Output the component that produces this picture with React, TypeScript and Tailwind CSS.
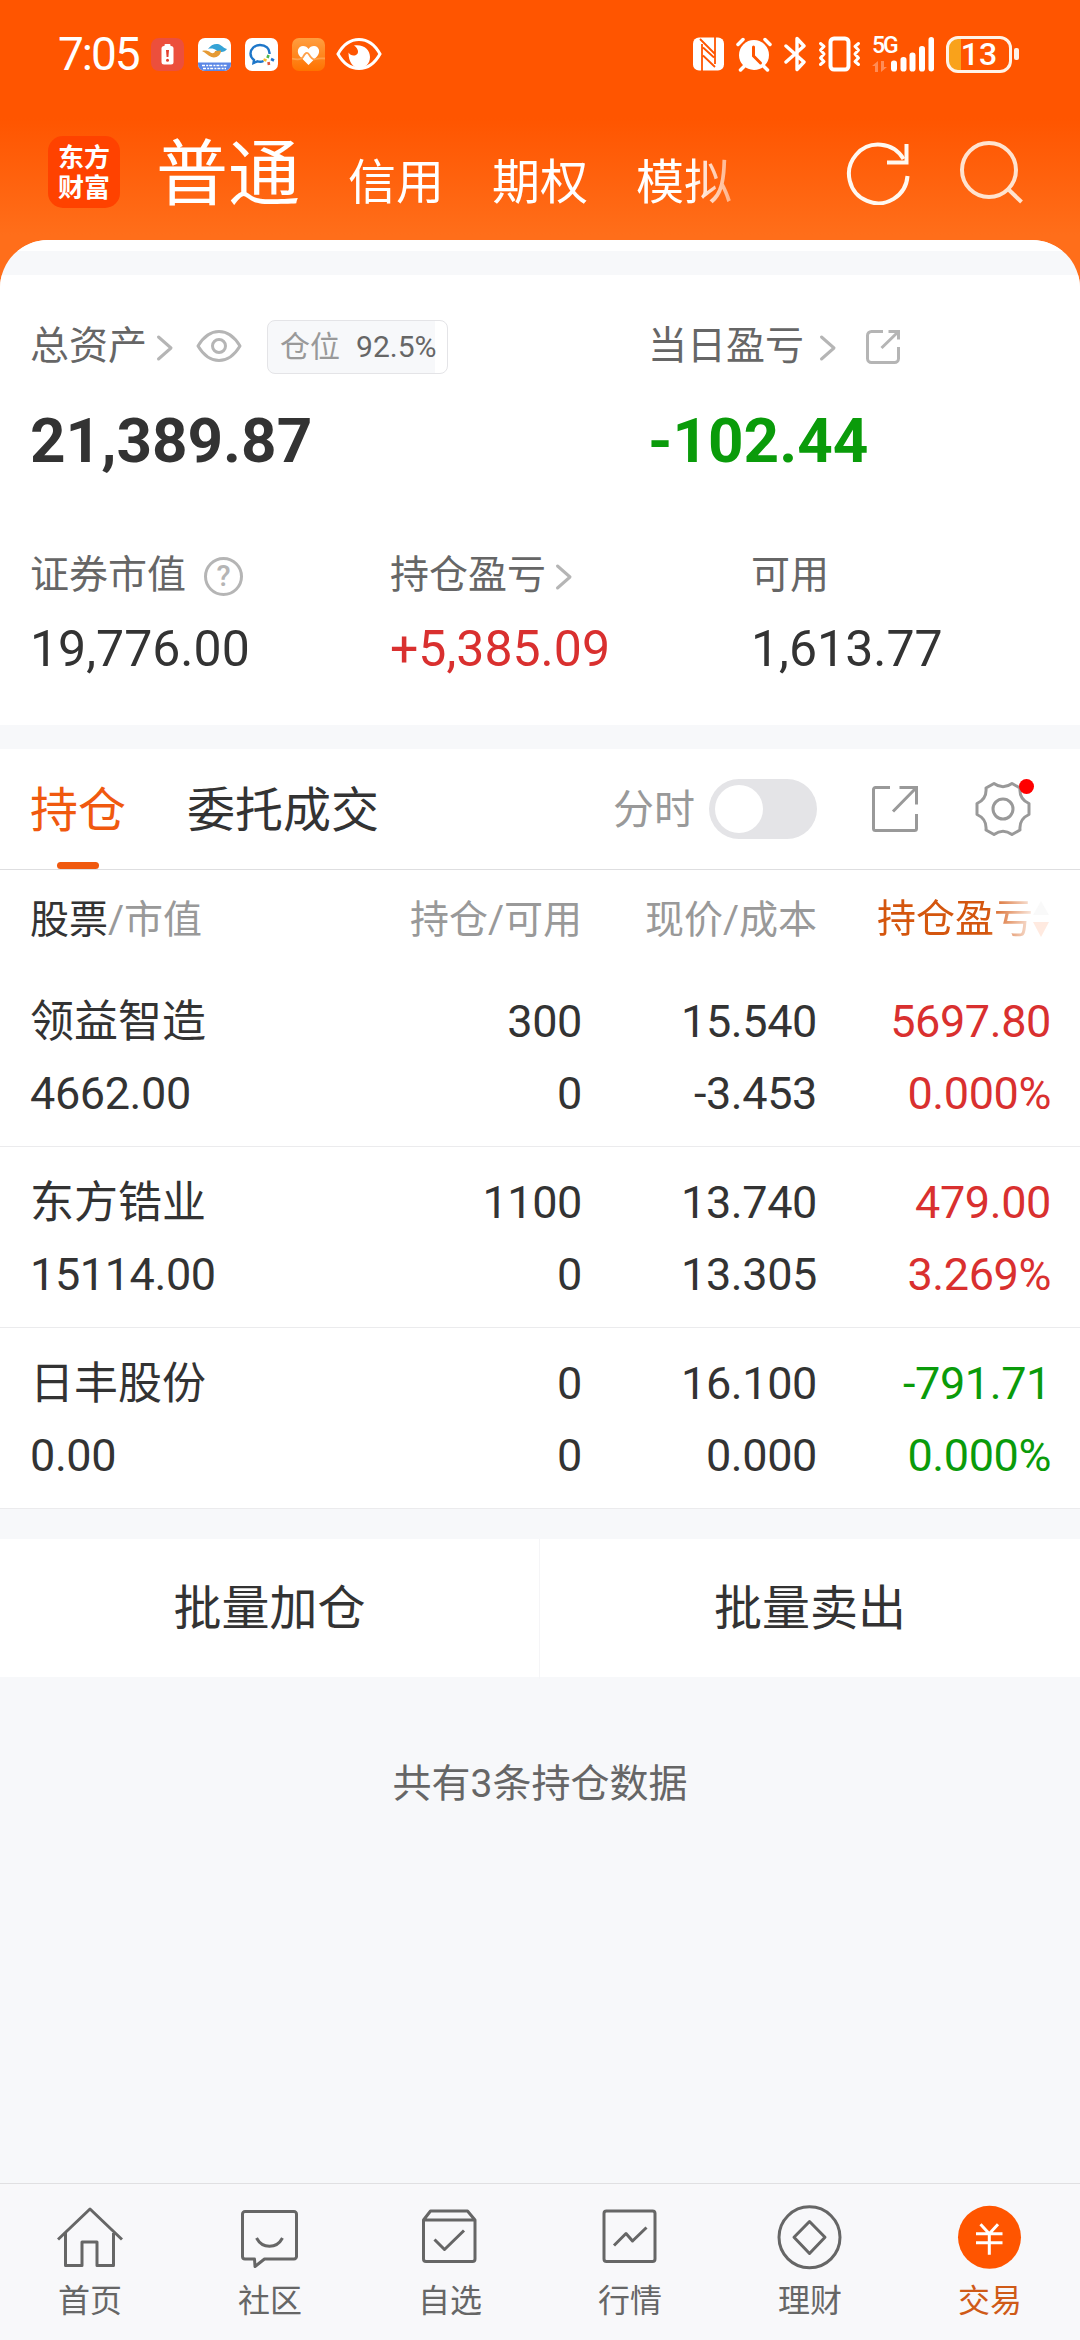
import React from "react";

const holdings = [
  {
    name: "领益智造",
    value: "4662.00",
    amount: "300",
    available: "0",
    price: "15.540",
    cost: "-3.453",
    profit: "5697.80",
    rate: "0.000%",
    color: "text-[#d9302f]",
  },
  {
    name: "东方锆业",
    value: "15114.00",
    amount: "1100",
    available: "0",
    price: "13.740",
    cost: "13.305",
    profit: "479.00",
    rate: "3.269%",
    color: "text-[#d9302f]",
  },
  {
    name: "日丰股份",
    value: "0.00",
    amount: "0",
    available: "0",
    price: "16.100",
    cost: "0.000",
    profit: "-791.71",
    rate: "0.000%",
    color: "text-[#0a9b0a]",
  },
];

const Chevron = ({ className = "" }: { className?: string }) => (
  <svg
    className={className}
    width="18"
    height="28"
    viewBox="0 0 18 28"
    fill="none"
    stroke="#b5b5b5"
    strokeWidth="3"
    strokeLinecap="round"
    strokeLinejoin="round"
  >
    <path d="M2.5 3L15 14L2.5 25" />
  </svg>
);

const StatusBar = () => (
  <div className="flex h-[108px] items-center pl-[58px] pr-[61px] text-white">
    <span className="w-[93px] text-[46px] leading-[46px] tracking-[-2px]">
      7:05
    </span>
    <div className="flex items-center gap-[14px]">
      {/* battery warning */}
      <svg width="33" height="33" viewBox="0 0 33 33">
        <rect width="33" height="33" rx="8" fill="#ec4f3c" />
        <rect x="13.5" y="6" width="6" height="3" rx="1" fill="#fff" />
        <rect x="10.5" y="8" width="12" height="18.5" rx="2.5" fill="#fff" />
        <path d="M15 12h3l-.6 7h-1.8z" fill="#e33f2e" />
        <circle cx="16.5" cy="22.3" r="1.5" fill="#e33f2e" />
      </svg>
      {/* cloud app */}
      <svg width="33" height="33" viewBox="0 0 33 33">
        <clipPath id="app">
          <rect width="33" height="33" rx="7" />
        </clipPath>
        <g clipPath="url(#app)">
          <rect width="33" height="33" fill="#fff" />
          <path
            d="M10 11C13 6.5 19 4.500 23 7.500C25 9 27 10.500 29 11C27 14.500 22 15 18.500 12.500C16 10.500 13 10 10 11Z"
            fill="#35a3d6"
          />
          <path
            d="M4 13C7 12 10 12.500 12.500 14.500C14.500 16 17 15 17 13L23 12.500C23 17.500 18 20.500 13.500 19C10 17.500 7 14.500 4 13Z"
            fill="#e59a35"
          />
          <rect y="24.5" width="33" height="9" fill="#5b87e6" />
          <path
            d="M4 27.500H29M5 30.500H28"
            stroke="#fff"
            strokeWidth="1.5"
            strokeDasharray="3 1.200 2 1"
          />
        </g>
      </svg>
      {/* work chat */}
      <svg width="33" height="33" viewBox="0 0 33 33" fill="none">
        <rect width="33" height="33" rx="7" fill="#fff" />
        <path
          d="M24.5 16C25 10.5 20.5 7 15 7C9.5 7 5.5 11 5.5 15.5C5.5 18 7 20.5 9 22L8.5 25L12.5 23.3C14.5 23.9 17 23.7 18.5 23"
          stroke="#1d76c9"
          strokeWidth="2.4"
        />
        <path d="M23.5 17L22.5 20" stroke="#4fb848" strokeWidth="2.6" />
        <path d="M26 21L29 22.5" stroke="#2273c8" strokeWidth="2.6" />
        <path d="M23.5 24L24 27" stroke="#e2583a" strokeWidth="2.6" />
        <path d="M18.5 21.5L21.5 22.5" stroke="#f6bd2f" strokeWidth="2.6" />
      </svg>
      {/* health */}
      <svg width="33" height="33" viewBox="0 0 33 33">
        <defs>
          <linearGradient id="health" x1="0" y1="0" x2="0" y2="1">
            <stop offset="0" stopColor="#ff9e40" />
            <stop offset="1" stopColor="#ff7200" />
          </linearGradient>
        </defs>
        <rect width="33" height="33" rx="7" fill="url(#health)" />
        <path
          d="M16.5 27L8 18.5C4 14 6 8 11 8C13.5 8 15.300 9.200 16.5 11C17.700 9.200 19.5 8 22 8C27 8 29 14 25 18.5Z"
          fill="#fff"
        />
        <path
          d="M0 20.500C4 21.500 9 22.500 11 19C13 15 15 13.500 17 16.500C19 20 21 22.500 24 21C27 20 30 20.500 33 20.500"
          fill="none"
          stroke="#ffa04a"
          strokeWidth="1.8"
        />
      </svg>
    </div>
    <svg
      className="ml-[11px]"
      width="46"
      height="34"
      viewBox="0 0 46 34"
      fill="none"
    >
      <path
        d="M2 17C7 8 14 2.500 23 2.500S39 8 44 17C39 26 32 31.500 23 31.500S7 26 2 17z"
        stroke="#fff"
        strokeWidth="3"
      />
      <path
        d="M18 8.500C28 7 34 13 34 20C34 27 29 31 23 31C17 31 12.500 25 12.500 15.500C14 18 17 19.500 20 18C23 16.500 23 12 18 8.500Z"
        fill="#fff"
      />
    </svg>

    <div className="ml-auto flex items-center">
      {/* nfc */}
      <svg width="31" height="34" viewBox="0 0 31 34" fill="none">
        <rect x="0" y="0.5" width="31" height="33" rx="6" fill="#fff" />
        <path
          d="M9 34V7M22 0V27M7 2L22 17M10 10.500L21 20.500M10 18.500L22 30"
          stroke="#ff5500"
          strokeWidth="1.8"
        />
      </svg>
      <svg
        className="ml-[12px]"
        width="36"
        height="35"
        viewBox="0 0 36 35"
        fill="none"
      >
        <circle cx="18" cy="18" r="15" fill="#fff" />
        <path
          d="M8 29.5L4.5 33M28 29.5L31.5 33M2 7.500L7 2.500M34 7.500L29 2.500"
          stroke="#fff"
          strokeWidth="3.5"
          strokeLinecap="round"
        />
        <path
          d="M17.500 10V19L24.500 26"
          stroke="#ff5500"
          strokeWidth="3"
          strokeLinecap="round"
        />
      </svg>
      <svg
        className="ml-[12px]"
        width="23"
        height="36"
        viewBox="0 0 23 36"
        fill="none"
        stroke="#fff"
        strokeWidth="3.4"
        strokeLinecap="round"
        strokeLinejoin="round"
      >
        <path d="M2 10L20 26L13 33.500V2.500L20 10L2 26" />
      </svg>
      <svg
        className="ml-[11px]"
        width="43"
        height="36"
        viewBox="0 0 43 36"
        fill="none"
        stroke="#fff"
        strokeLinecap="round"
        strokeLinejoin="round"
      >
        <rect x="12.5" y="2.5" width="18" height="31" rx="3.5" strokeWidth="4" />
        <path
          d="M2.500 7.500L6 10.500L2.500 14L6 18L2.500 22L6 25.500L2.500 28.500M40.500 7.500L37 10.500L40.500 14L37 18L40.500 22L37 25.500L40.500 28.500"
          strokeWidth="3"
        />
      </svg>
      <div className="ml-[11px] flex h-[35px] items-end">
        <div className="flex h-full w-[19px] flex-col justify-between">
          <span className="text-[23px] font-medium leading-[18px] tracking-[-2px]">
            5G
          </span>
          <svg width="16" height="11" viewBox="0 0 16 11" fill="#ff8c55">
            <path d="M0 5L6 0V11H3V5ZM9 0V11L15 6H12V0Z" />
          </svg>
        </div>
        <svg width="44" height="35" viewBox="0 0 44 35" fill="#fff">
          <rect x="0" y="23.5" width="6" height="11" rx="2.8" />
          <rect x="9.5" y="20" width="6" height="14.5" rx="2.8" />
          <rect x="18.5" y="15.5" width="6" height="19" rx="2.8" />
          <rect x="28" y="9" width="6" height="25.5" rx="2.8" />
          <rect x="37.5" y="0" width="5.5" height="34.5" rx="2.75" />
        </svg>
      </div>
      <div className="ml-[11px] flex h-[37px] w-[66px] items-center overflow-hidden rounded-[12px] border-[3px] border-[#fff3e8] bg-[linear-gradient(90deg,#f9a21b_12px,transparent_12px)]">
        <span className="w-full text-center text-[32px] font-medium leading-[31px]">
          13
        </span>
      </div>
      <div className="ml-[2px] h-[12px] w-[5px] rounded-[2px] bg-[#fff3e8]" />
    </div>
  </div>
);

const Header = () => (
  <header className="h-[300px] bg-[linear-gradient(180deg,#ff5500_0px,#ff5500_118px,#ff6e1a_235px,#ff6e1a_300px)]">
    <StatusBar />
    <div className="flex h-[132px] pl-[48px] text-white">
      <div className="mt-[28px] flex h-[72px] w-[72px] flex-col items-center justify-center rounded-[15px] bg-[#ff4200] pt-[2px] text-[26px] font-bold leading-[30px]">
        <span>东方</span>
        <span>财富</span>
      </div>
      <div className="ml-[36px] flex items-baseline gap-[48px] whitespace-nowrap text-[48px] [mask-image:linear-gradient(90deg,#000_535px,transparent_615px)]">
        <span className="text-[72px] leading-[134px]">普通</span>
        <span>信用</span>
        <span>期权</span>
        <span>模拟</span>
      </div>
      <svg
        className="ml-auto mt-[31px]"
        width="66"
        height="66"
        viewBox="0 0 66 66"
        fill="none"
        stroke="#fff8f0"
        strokeWidth="4"
      >
        <path d="M62.500 37A29.300 29.300 0 1 1 58.500 20" />
        <path d="M61.500 5V23.500H42" />
      </svg>
      <svg
        className="ml-[47px] mr-[56px] mt-[31px]"
        width="66"
        height="66"
        viewBox="0 0 66 66"
        fill="none"
        stroke="#ffe3cf"
        strokeWidth="4"
      >
        <circle cx="31" cy="31" r="27" />
        <path d="M50 50L63.500 63" />
      </svg>
    </div>
  </header>
);

const Assets = () => (
  <section className="h-[450px] bg-white pt-[41px] text-[#666]">
    <div className="flex h-[60px] text-[39px] leading-[60px]">
      <div className="flex w-[648px] items-center pl-[30px]">
        <span>总资产</span>
        <Chevron className="ml-[9px] mt-[3px]" />
        <svg
          className="ml-[22px]"
          width="46"
          height="34"
          viewBox="0 0 46 34"
          fill="none"
          stroke="#b5b5b5"
          strokeWidth="3"
        >
          <path
            d="M2 17C8 7 14 2.500 23 2.500S38 7 44 17C38 27 32 31.500 23 31.500S8 27 2 17z"
            strokeLinejoin="round"
          />
          <circle cx="23" cy="17" r="6.5" />
        </svg>
        <div className="ml-[25px] mt-[1px] flex h-[54px] w-[181px] items-center rounded-[8px] border border-[#e4e4e7] bg-[linear-gradient(90deg,#f7f8fa_167px,#fff_167px)] pl-[12px] text-[30px] leading-[50px]">
          <span className="text-[#999]">仓位</span>
          <span className="ml-[16px]">92.5%</span>
        </div>
      </div>
      <div className="flex items-center">
        <span>当日盈亏</span>
        <Chevron className="ml-[15px] mt-[3px]" />
        <svg
          className="ml-[28px] mt-[2px]"
          width="36"
          height="36"
          viewBox="0 0 36 36"
          fill="none"
          stroke="#b5b5b5"
          strokeWidth="3"
        >
          <path d="M18 2.500H6.500A4 4 0 0 0 2.500 6.500V29.500A4 4 0 0 0 6.500 33.500H29.500A4 4 0 0 0 33.500 29.500V18" />
          <path d="M23.500 2.500H33.500V10.500M33.500 2.500L16.500 19" />
        </svg>
      </div>
    </div>
    <div className="mt-[30px] flex h-[70px] text-[62px] font-bold leading-[70px]">
      <span className="w-[648px] pl-[30px] text-[#333]">21,389.87</span>
      <span className="text-[#0a9b0a]">-102.44</span>
    </div>
    <div className="mt-[69px] flex h-[60px] text-[39px] leading-[60px]">
      <div className="flex w-[390px] items-center pl-[30px]">
        <span>证券市值</span>
        <span className="ml-[18px] mt-[2px] flex h-[39px] w-[39px] items-center justify-center rounded-full border-[3px] border-[#b5b5b5] text-[29px] font-medium leading-[33px] text-[#b5b5b5]">
          ?
        </span>
      </div>
      <div className="flex w-[361px] items-center">
        <span>持仓盈亏</span>
        <Chevron className="ml-[9px] mt-[3px]" />
      </div>
      <span>可用</span>
    </div>
    <div className="mt-[14px] flex h-[60px] text-[50px] leading-[60px] text-[#333]">
      <span className="w-[390px] pl-[30px]">19,776.00</span>
      <span className="w-[361px] text-[#d9302f]">+5,385.09</span>
      <span>1,613.77</span>
    </div>
  </section>
);

const Tabs = () => (
  <div className="flex h-[121px] items-center border-b border-[#dedee0] bg-white pl-[30px] text-[48px] text-[#333]">
    <div className="relative flex h-[120px] items-center pt-[3px] text-[#f0590f]">
      <span>持仓</span>
      <div className="absolute bottom-0 left-[27px] h-[7px] w-[42px] rounded-full bg-[#f0590f]" />
    </div>
    <span className="ml-[61px] pt-[3px]">委托成交</span>
    <span className="ml-[234px] pt-[3px] text-[41px] text-[#999]">分时</span>
    <div className="ml-[14px] flex h-[60px] w-[108px] items-center rounded-full bg-[#e4e4e7] pl-[6px]">
      <div className="h-[48px] w-[48px] rounded-full bg-white" />
    </div>
    <svg
      className="ml-[54px]"
      width="48"
      height="48"
      viewBox="0 0 48 48"
      fill="none"
      stroke="#999"
      strokeWidth="3"
    >
      <path d="M19 2.500H4.500A2 2 0 0 0 2.500 4.500V43.500A2 2 0 0 0 4.500 45.500H43.500A2 2 0 0 0 45.500 43.500V29" />
      <path d="M28.500 2.500H45.500V19.500M45.500 2.500L22 26.500" />
    </svg>
    <div className="relative ml-[55px]">
      <svg
        width="58"
        height="58"
        viewBox="0 0 58 58"
        fill="none"
        stroke="#999"
        strokeWidth="3"
        strokeLinejoin="round"
      >
        <path d="M20 3.500Q29 10 38 3.500L46 8Q45 19 55 23.500V34.500Q45 39 46 50L38 54.500Q29 48 20 54.500L12 50Q13 39 3 34.500V23.500Q13 19 12 8Z" />
        <circle cx="29" cy="29" r="10" />
      </svg>
      <div className="absolute -right-[2px] -top-[1px] h-[15px] w-[15px] rounded-full bg-[#ff0000]" />
    </div>
  </div>
);

const Holdings = () => (
  <section className="bg-white">
    <div className="flex h-[96px] pt-[2px] text-[39px] leading-[96px] text-[#999]">
      <div className="w-[282px] pl-[30px]">
        <span className="text-[#333]">股票</span>/市值
      </div>
      <span className="w-[300px] text-right">持仓/可用</span>
      <span className="w-[235px] text-right">现价/成本</span>
      <div className="ml-[60px] flex items-center text-[#d4560e] [mask-image:linear-gradient(90deg,#000_110px,rgba(0,0,0,0.12)_156px)]">
        <span>持仓盈亏</span>
        <svg width="16" height="36" viewBox="0 0 16 36">
          <path d="M8 0L16 14H0z" fill="#ccc" />
          <path d="M8 36L16 21H0z" fill="#ff5500" />
        </svg>
      </div>
    </div>
    {holdings.map((item) => (
      <div
        key={item.name}
        className="flex h-[181px] border-b border-[#ebebed] pt-[20px] text-[45px] leading-[72px] tracking-[-0.4px] text-[#333]"
      >
        <div className="flex w-[282px] flex-col pl-[30px]">
          <span className="text-[44px] tracking-normal">{item.name}</span>
          <span>{item.value}</span>
        </div>
        <div className="flex w-[300px] flex-col text-right">
          <span>{item.amount}</span>
          <span>{item.available}</span>
        </div>
        <div className="flex w-[235px] flex-col text-right">
          <span>{item.price}</span>
          <span>{item.cost}</span>
        </div>
        <div className={`flex w-[234px] flex-col text-right ${item.color}`}>
          <span>{item.profit}</span>
          <span>{item.rate}</span>
        </div>
      </div>
    ))}
  </section>
);

const navItems = [
  {
    label: "首页",
    icon: (
      <>
        <path d="M1 35.500L33 5L65 35.500" />
        <path d="M8.500 29V61.500H25V38H40V61.500H56.500V29" />
      </>
    ),
  },
  {
    label: "社区",
    icon: (
      <>
        <path d="M17.500 55H8A2.500 2.500 0 0 1 5.500 52.500V10A2.500 2.500 0 0 1 8 7.500H57A2.500 2.500 0 0 1 59.500 10V52.500A2.500 2.500 0 0 1 57 55H27.500L18 62.500Z" />
        <path d="M19.500 34Q24 42.300 32.500 42.300T45.500 34" />
      </>
    ),
  },
  {
    label: "自选",
    icon: (
      <>
        <path d="M6.500 16L13.500 7H50.500L58 16V55A2.500 2.500 0 0 1 55.500 57.500H9A2.500 2.500 0 0 1 6.500 55ZM6.500 16H58" />
        <path d="M17.500 35.500L27.500 45.500L47 26.500" />
      </>
    ),
  },
  {
    label: "行情",
    icon: (
      <>
        <rect x="7" y="7" width="51" height="50.5" rx="2.5" />
        <path d="M17 41.500L29 29.500L35.500 37L49.500 23.500" />
      </>
    ),
  },
  {
    label: "理财",
    icon: (
      <>
        <circle cx="32.5" cy="33.3" r="30.5" />
        <path d="M32.500 17.500L48 33.300L32.500 49.500L17 33.300Z" />
      </>
    ),
  },
  {
    label: "交易",
    active: true,
    icon: (
      <>
        <circle cx="32.5" cy="33.3" r="31.5" fill="#ff5500" stroke="none" />
        <path
          d="M23.500 20.300L32.300 29.700L41 20.300M19 29.700H45.500M19 38.700H45.500M32.300 29.700V50.700"
          stroke="#fff"
        />
      </>
    ),
  },
];

const BottomNav = () => (
  <nav className="mt-auto grid h-[157px] grid-cols-6 border-t border-[#e0e0e2] bg-[#f8f8fa] pt-[20px]">
    {navItems.map((item) => (
      <div key={item.label} className="flex flex-col items-center">
        <svg
          width="66"
          height="66"
          viewBox="0 0 66 66"
          fill="none"
          stroke="#666"
          strokeWidth="3"
          strokeLinejoin="round"
        >
          {item.icon}
        </svg>
        <span
          className={`mt-[11px] text-[32px] leading-[40px] ${
            item.active ? "text-[#cf5a17]" : "text-[#666]"
          }`}
        >
          {item.label}
        </span>
      </div>
    ))}
  </nav>
);

const App = () => {
  return (
    <div className="flex h-[2340px] w-[1080px] flex-col overflow-hidden bg-[#f7f8fa] font-['Roboto','Noto_Sans_CJK_SC',sans-serif]">
      <Header />
      {/* rounded sheet slides up over the header */}
      <main className="-mt-[60px] overflow-hidden rounded-t-[48px] bg-[#f7f8fa]">
        <div className="h-[11px] bg-white" />
        <div className="h-[24px]" />
        <Assets />
        <div className="h-[24px]" />
        <Tabs />
        <Holdings />
        <div className="mt-[30px] grid h-[138px] grid-cols-2 bg-white text-center text-[48px] leading-[140px] text-[#333]">
          <span className="border-r border-[#f5f5f7]">批量加仓</span>
          <span>批量卖出</span>
        </div>
        <p className="mt-[77px] text-center text-[39px] leading-[60px] text-[#666]">
          共有3条持仓数据
        </p>
      </main>
      <BottomNav />
    </div>
  );
};

export default App;
